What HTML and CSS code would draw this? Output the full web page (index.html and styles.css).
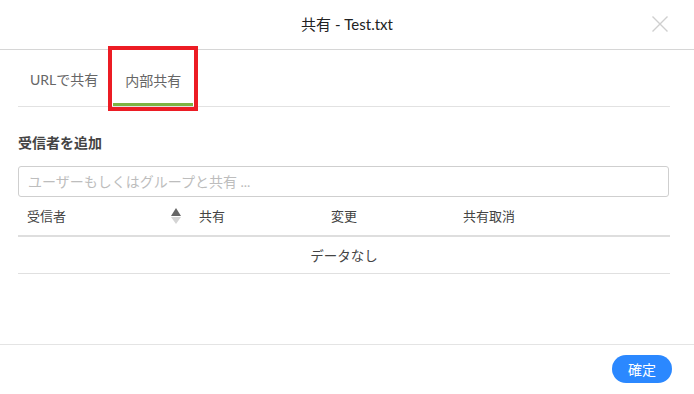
FILE: index.html
```html
<!DOCTYPE html>
<html lang="ja">
<head>
<meta charset="utf-8">
<title>共有 - Test.txt</title>
<link rel="stylesheet" href="styles.css">
</head>
<body>
<div class="dialog">
  <header class="header">
    <h1 class="title">共有 - Test.txt</h1>
    <button class="close" aria-label="close">
      <svg width="16" height="16" viewBox="0 0 16 16"><path d="M0.5 0.5L15.5 15.5M15.5 0.5L0.5 15.5" stroke="#cfcfcf" stroke-width="1.4" fill="none"/></svg>
    </button>
  </header>
  <main class="content">
    <nav class="tabs">
      <div class="tab">URLで共有</div>
      <div class="tab active">内部共有</div>
    </nav>
    <div class="section-label">受信者を追加</div>
    <input class="search" type="text" placeholder="ユーザーもしくはグループと共有 ...">
    <div class="table">
      <div class="thead">
        <div class="th th-sort"><span>受信者</span>
          <span class="sort">
            <svg width="10" height="16" viewBox="0 0 10 16"><path d="M5 0L10 8H0Z" fill="#666"/><path d="M0 9H10L5 16Z" fill="#d4d4d4"/></svg>
          </span>
        </div>
        <div class="th">共有</div>
        <div class="th">変更</div>
        <div class="th">共有取消</div>
      </div>
      <div class="empty">データなし</div>
    </div>
  </main>
  <footer class="footer">
    <button class="ok">確定</button>
  </footer>
</div>
</body>
</html>
```
FILE: styles.css
```css
* { box-sizing: border-box; }
html, body { margin: 0; padding: 0; background: #fff; }
body {
  font-family: Lato, "Noto Sans CJK JP", sans-serif;
  color: #333;
  width: 694px;
  height: 394px;
  overflow: hidden;
}
.dialog {
  height: 394px;
  display: flex;
  flex-direction: column;
}
.header {
  position: relative;
  height: 50px;
  border-bottom: 1px solid #d6d6d6;
  display: flex;
  align-items: center;
  justify-content: center;
}
.title {
  margin: 0;
  font-size: 15px;
  font-weight: normal;
  color: #222;
  line-height: 20px;
  padding-bottom: 2px;
}
.close {
  position: absolute;
  right: 26px;
  top: 16px;
  width: 16px;
  height: 16px;
  padding: 0;
  border: 0;
  background: none;
  display: flex;
}
.content {
  flex: 1;
  padding: 0 24px 0 18px;
}
.tabs {
  display: flex;
  gap: 3px;
  height: 57px;
  border-bottom: 1px solid #e2e2e2;
}
.tab {
  position: relative;
  height: 56px;
  padding: 4px 12px 0;
  display: flex;
  align-items: center;
  font-size: 14px;
  color: #666;
  border-bottom: 3px solid transparent;
}
.tab.active {
  border-bottom-color: #7cb342;
  padding-top: 7px;
}
.tab.active::after {
  content: "";
  position: absolute;
  left: -5px;
  right: -5px;
  top: -4px;
  bottom: -8px;
  border: 4px solid #ec1c24;
}
.section-label {
  margin-top: 26px;
  font-size: 14px;
  font-weight: bold;
  color: #444;
  line-height: 20px;
}
.search {
  display: block;
  width: 651px;
  height: 31px;
  margin-top: 13px;
  border: 1px solid #cfcfcf;
  border-radius: 3px;
  padding: 0 9px;
  font-family: inherit;
  font-size: 14px;
  color: #333;
  outline: none;
}
.search::placeholder { color: #bdbdbd; }
.table { width: 652px; }
.thead {
  display: grid;
  grid-template-columns: 172px 132px 132px 1fr;
  height: 40px;
  border-bottom: 2px solid #dedede;
}
.th {
  display: flex;
  align-items: center;
  padding: 0 9px;
  font-size: 13px;
  color: #444;
  padding-bottom: 2px;
}
.th-sort { justify-content: space-between; }
.sort { display: flex; padding-top: 1px; }
.empty {
  height: 37px;
  border-bottom: 1px solid #e0e0e0;
  display: flex;
  align-items: center;
  justify-content: center;
  font-size: 13.5px;
  color: #444;
}
.footer {
  height: 50px;
  border-top: 1px solid #e4e4e4;
  display: flex;
  align-items: center;
  justify-content: flex-end;
  padding: 0 22px 1px 0;
}
.ok {
  width: 60px;
  height: 28px;
  border: 0;
  border-radius: 14px;
  background: #2b88ff;
  color: #fff;
  font-family: inherit;
  font-size: 14px;
  padding: 0;
}
```
